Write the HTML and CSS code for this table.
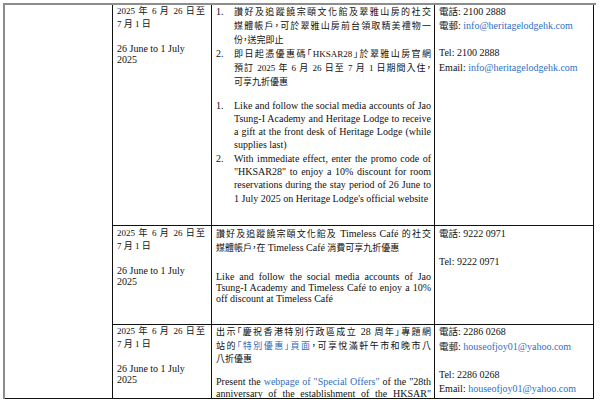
FILE: index.html
```html
<!DOCTYPE html>
<html lang="zh-Hant">
<head>
<meta charset="utf-8">
<title>Offers</title>
<link rel="stylesheet" href="styles.css">
</head>
<body>
<div class="sheet">
  <div class="cell first"></div>

  <!-- Row 1 -->
  <div class="cell date">
    <div class="zh lh13">
      <span class="ln j">2025 年 6 月 26 日至</span>
      <span class="ln">7 月 1 日</span>
    </div>
    <div class="en lh11 gap-date">
      <span class="ln">26 June to 1 July</span>
      <span class="ln">2025</span>
    </div>
  </div>
  <div class="cell offer">
    <div class="zh lh14">
      <div class="item">
        <span class="num">1.</span>
        <div class="txt">
          <span class="ln j">讚好及追蹤饒宗頤文化館及翠雅山房的社交</span>
          <span class="ln j">媒體帳戶，可於翠雅山房前台領取精美禮物一</span>
          <span class="ln">份，送完即止</span>
        </div>
      </div>
      <div class="item">
        <span class="num">2.</span>
        <div class="txt">
          <span class="ln j">即日起憑優惠碼「HKSAR28」於翠雅山房官網</span>
          <span class="ln j">預訂 2025 年 6 月 26 日至 7 月 1 日期間入住，</span>
          <span class="ln">可享九折優惠</span>
        </div>
      </div>
    </div>
    <div class="en lh133 gap-list">
      <div class="item">
        <span class="num">1.</span>
        <div class="txt">
          <span class="ln j">Like and follow the social media accounts of Jao</span>
          <span class="ln j">Tsung-I Academy and Heritage Lodge to receive</span>
          <span class="ln j">a gift at the front desk of Heritage Lodge (while</span>
          <span class="ln">supplies last)</span>
        </div>
      </div>
      <div class="item">
        <span class="num">2.</span>
        <div class="txt">
          <span class="ln j">With immediate effect, enter the promo code of</span>
          <span class="ln j">"HKSAR28" to enjoy a 10% discount for room</span>
          <span class="ln j">reservations during the stay period of 26 June to</span>
          <span class="ln">1 July 2025 on Heritage Lodge's official website</span>
        </div>
      </div>
    </div>
  </div>
  <div class="cell contact">
    <div class="lh14">
      <span class="ln"><span class="zhl">電話</span>: 2100 2888</span>
      <span class="ln"><span class="zhl">電郵</span>: <a class="link" href="#">info@heritagelodgehk.com</a></span>
    </div>
    <div class="lh15 gap-c1">
      <span class="ln">Tel: 2100 2888</span>
      <span class="ln">Email: <a class="link" href="#">info@heritagelodgehk.com</a></span>
    </div>
  </div>

  <!-- Row 2 -->
  <div class="cell date r2">
    <div class="zh lh13">
      <span class="ln j">2025 年 6 月 26 日至</span>
      <span class="ln">7 月 1 日</span>
    </div>
    <div class="en lh11 gap-date">
      <span class="ln">26 June to 1 July</span>
      <span class="ln">2025</span>
    </div>
  </div>
  <div class="cell offer r2">
    <div class="zh lh14">
      <span class="ln j">讚好及追蹤饒宗頤文化館及 <span class="lat">Timeless Café</span> 的社交</span>
      <span class="ln">媒體帳戶，在 <span class="lat">Timeless Café</span> 消費可享九折優惠</span>
    </div>
    <div class="en lh11 gap-r2">
      <span class="ln j">Like and follow the social media accounts of Jao</span>
      <span class="ln j">Tsung-I Academy and Timeless Café to enjoy a 10%</span>
      <span class="ln">off discount at Timeless Café</span>
    </div>
  </div>
  <div class="cell contact r2">
    <div class="lh14">
      <span class="ln"><span class="zhl">電話</span>: 9222 0971</span>
    </div>
    <div class="lh14 gap-c2">
      <span class="ln">Tel: 9222 0971</span>
    </div>
  </div>

  <!-- Row 3 -->
  <div class="cell date r3">
    <div class="zh lh13">
      <span class="ln j">2025 年 6 月 26 日至</span>
      <span class="ln">7 月 1 日</span>
    </div>
    <div class="en lh11 gap-date">
      <span class="ln">26 June to 1 July</span>
      <span class="ln">2025</span>
    </div>
  </div>
  <div class="cell offer r3">
    <div class="zh lh135">
      <span class="ln j">出示「慶祝香港特別行政區成立 <span class="lat">28</span> 周年」專題網</span>
      <span class="ln j">站的<a class="link" href="#">「特別優惠」頁面</a>，可享悅滿軒午市和晚市八</span>
      <span class="ln">八折優惠</span>
    </div>
    <div class="en lh12 gap-r3">
      <span class="ln j">Present the <a class="link" href="#">webpage of "Special Offers"</a> of the "28th</span>
      <span class="ln j">anniversary of the establishment of the HKSAR"</span>
    </div>
  </div>
  <div class="cell contact r3">
    <div class="lh135">
      <span class="ln"><span class="zhl">電話</span>: 2286 0268</span>
      <span class="ln"><span class="zhl">電郵</span>: <a class="link" href="#">houseofjoy01@yahoo.com</a></span>
    </div>
    <div class="lh14 gap-c3">
      <span class="ln">Tel: 2286 0268</span>
      <span class="ln">Email: <a class="link" href="#">houseofjoy01@yahoo.com</a></span>
    </div>
  </div>
</div>
</body>
</html>
```

FILE: styles.css
```css
html, body {
  margin: 0;
  padding: 0;
  background: #ffffff;
}

body {
  font-family: "Liberation Serif", "Noto Sans CJK TC", serif;
  font-size: 10px;
  color: #111111;
}

.sheet {
  margin: 3px 0 0 3px;
  width: 591px;
  display: grid;
  grid-template-columns: 108px 99px 223px 159px;
  grid-template-rows: 221px 99px 74px;
  border-top: 2px solid #8d8d8d;
  border-left: 2px solid #8d8d8d;
}

.cell {
  box-sizing: border-box;
  border-right: 1px solid #111;
  border-bottom: 1px solid #111;
  overflow: hidden;
}

.first {
  grid-row: 1 / span 3;
}

.date {
  padding: 0 6px 0 4px;
}

.offer {
  padding: 0 3px 0 4px;
}

.contact {
  padding: 0 3px 0 4px;
}

.r2 {
  padding-top: 1px;
}

.ln {
  display: block;
  white-space: nowrap;
}

.j {
  text-align: justify;
  text-align-last: justify;
}

.zh {
  font-size: 9px;
  font-feature-settings: "palt";
}

.lat {
  font-size: 10px;
}

.en {
  font-size: 10px;
}

.zhl {
  font-size: 9.5px;
}

.item {
  display: flex;
}

.num {
  flex: none;
  width: 18px;
  font-size: 10px;
}

.txt {
  flex: 1;
  min-width: 0;
}

.link {
  color: #2f6fbf;
  text-decoration: none;
}

.lh11 { line-height: 11px; }
.lh12 { line-height: 12px; }
.lh13 { line-height: 13px; }
.lh133 { line-height: 13.3px; }
.lh135 { line-height: 13.5px; }
.lh14 { line-height: 14px; }
.lh15 { line-height: 15px; }

.gap-date { margin-top: 12px; }
.gap-list { margin-top: 9.5px; }
.gap-r2 { margin-top: 16px; }
.gap-r3 { margin-top: 9.5px; }
.gap-c1 { margin-top: 11.5px; }
.gap-c2 { margin-top: 14px; }
.gap-c3 { margin-top: 14px; }
```
